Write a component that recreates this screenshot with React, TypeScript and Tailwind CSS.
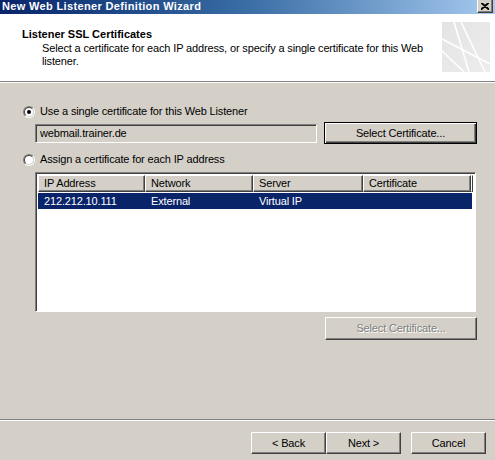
const raised =
  "border border-t-white border-l-white border-r-[#404040] border-b-[#404040] shadow-[inset_-1px_-1px_0_#808080]";

function Radio({ checked }: { checked?: boolean }) {
  return (
    <span className="relative w-[12px] h-[12px] rounded-full border border-t-[#808080] border-l-[#808080] border-r-white border-b-white flex items-center justify-center">
      <span className="w-[10px] h-[10px] rounded-full bg-white border border-t-[#404040] border-l-[#404040] border-r-[#d4d0c8] border-b-[#d4d0c8] flex items-center justify-center">
        {checked && <span className="w-[4px] h-[4px] rounded-full bg-black" />}
      </span>
    </span>
  );
}

function HeaderIcon() {
  return (
    <svg width="48" height="50" viewBox="0 0 48 50" className="shrink-0">
      <defs>
        <linearGradient id="g" x1="0" y1="0" x2="1" y2="1">
          <stop offset="0" stopColor="#e4e4e4" />
          <stop offset="1" stopColor="#ececec" />
        </linearGradient>
      </defs>
      <rect width="48" height="50" fill="url(#g)" />
      <g stroke="#fff" strokeWidth="1.6" fill="none">
        <line x1="12" y1="0" x2="27" y2="50" />
        <line x1="19" y1="0" x2="43" y2="50" />
        <line x1="0" y1="17" x2="48" y2="42" />
        <line x1="0" y1="29" x2="22" y2="50" />
      </g>
    </svg>
  );
}

const columns = [
  { name: "IP Address", w: "w-[107px]" },
  { name: "Network", w: "w-[108px]" },
  { name: "Server", w: "w-[110px]" },
  { name: "Certificate", w: "w-[108px]" },
];

const rows = [["212.212.10.111", "External", "Virtual IP", ""]];

export default function App() {
  return (
    <div className="w-[495px] h-[460px] bg-[#d4d0c8] flex flex-col overflow-hidden font-['Liberation_Sans',Arial,sans-serif] text-[11px] leading-[13px] tracking-[-0.15px] text-black">
      {/* Title bar */}
      <div className="h-[14px] flex items-start justify-between bg-linear-to-r from-[#0a246a] via-[#3a6ea5] to-[#a6caf0] pl-[2px] pr-[2px]">
        <span className="text-white font-bold text-[11px] leading-[13px] tracking-[0.35px]">
          New Web Listener Definition Wizard
        </span>
        <span className={`w-[16px] h-[13px] bg-[#d4d0c8] flex items-center justify-center ${raised} border-t-0`}>
          <svg width="8" height="7" viewBox="0 0 8 7">
            <path d="M0 0 L8 7 M8 0 L0 7 M1 0 L8 6 M7 0 L0 6" stroke="#000" strokeWidth="1.3" />
          </svg>
        </span>
      </div>

      {/* Header */}
      <div className="h-[69px] bg-white flex justify-between pl-[22px] pr-[5px] pt-[8px] border-b border-b-white shadow-[inset_0_-1px_0_#808080]">
        <div className="flex flex-col min-w-0">
          <span className="font-bold mt-[6px] tracking-[0px]">Listener SSL Certificates</span>
          <span className="pl-[20px] mt-[1px] w-[420px]">
            Select a certificate for each IP address, or specify a single certificate for this Web listener.
          </span>
        </div>
        <HeaderIcon />
      </div>

      {/* Body */}
      <div className="flex flex-col pl-[23px] pr-[18px]">
        <label className="flex items-center gap-[5px] mt-[22px] h-[13px]">
          <Radio checked />
          <span>Use a single certificate for this Web Listener</span>
        </label>

        <div className="flex items-center mt-[4px] pl-[12px]">
          <div className="w-[282px] h-[19px] border border-t-[#808080] border-l-[#808080] border-r-white border-b-white shadow-[inset_1px_1px_0_#404040] flex items-center pl-[4px]">
            webmail.trainer.de
          </div>
          <button className="ml-[7px] w-[153px] h-[22px] border border-black bg-[#d4d0c8] shadow-[inset_1px_1px_0_#fff,inset_-1px_-1px_0_#404040,inset_-2px_-2px_0_#808080] flex items-center justify-center">
            Select Certificate...
          </button>
        </div>

        <label className="flex items-center gap-[5px] mt-[9px] h-[13px]">
          <Radio />
          <span>Assign a certificate for each IP address</span>
        </label>

        {/* List view */}
        <div className="ml-[12px] mt-[6px] w-[441px] h-[140px] bg-white border border-t-[#808080] border-l-[#808080] border-r-white border-b-white shadow-[inset_1px_1px_0_#404040] p-[2px] pb-0">
          <div className="flex h-[17px]">
            {columns.map((c) => (
              <div key={c.name} className={`${c.w} h-full bg-[#d4d0c8] ${raised} flex items-center pl-[5px]`}>
                {c.name}
              </div>
            ))}
            <div className={`flex-1 h-full bg-[#d4d0c8] ${raised}`} />
          </div>
          {rows.map((r) => (
            <div key={r[0]} className="flex h-[16px] mt-[1px] bg-[#0a246a] text-white mr-[1px]">
              {r.map((cell, i) => (
                <div key={i} className={`${columns[i].w} flex items-center pl-[6px]`}>
                  {cell}
                </div>
              ))}
            </div>
          ))}
        </div>

        <div className="flex justify-end mt-[5px]">
          <button
            disabled
            className={`w-[152px] h-[23px] bg-[#d4d0c8] ${raised} flex items-center justify-center text-[#808080] [text-shadow:1px_1px_0_#fff]`}
          >
            Select Certificate...
          </button>
        </div>
      </div>

      <div className="flex-1" />

      {/* Footer */}
      <div className="border-t border-t-[#808080] shadow-[inset_0_1px_0_#fff] h-[41px] flex items-start justify-end pt-[12px] pr-[9px]">
        <button className={`w-[75px] h-[22px] bg-[#d4d0c8] ${raised} flex items-center justify-center`}>
          &lt; Back
        </button>
        <button className={`w-[75px] h-[22px] bg-[#d4d0c8] ${raised} flex items-center justify-center`}>
          Next &gt;
        </button>
        <button className={`ml-[10px] w-[75px] h-[22px] bg-[#d4d0c8] ${raised} flex items-center justify-center`}>
          Cancel
        </button>
      </div>
    </div>
  );
}
